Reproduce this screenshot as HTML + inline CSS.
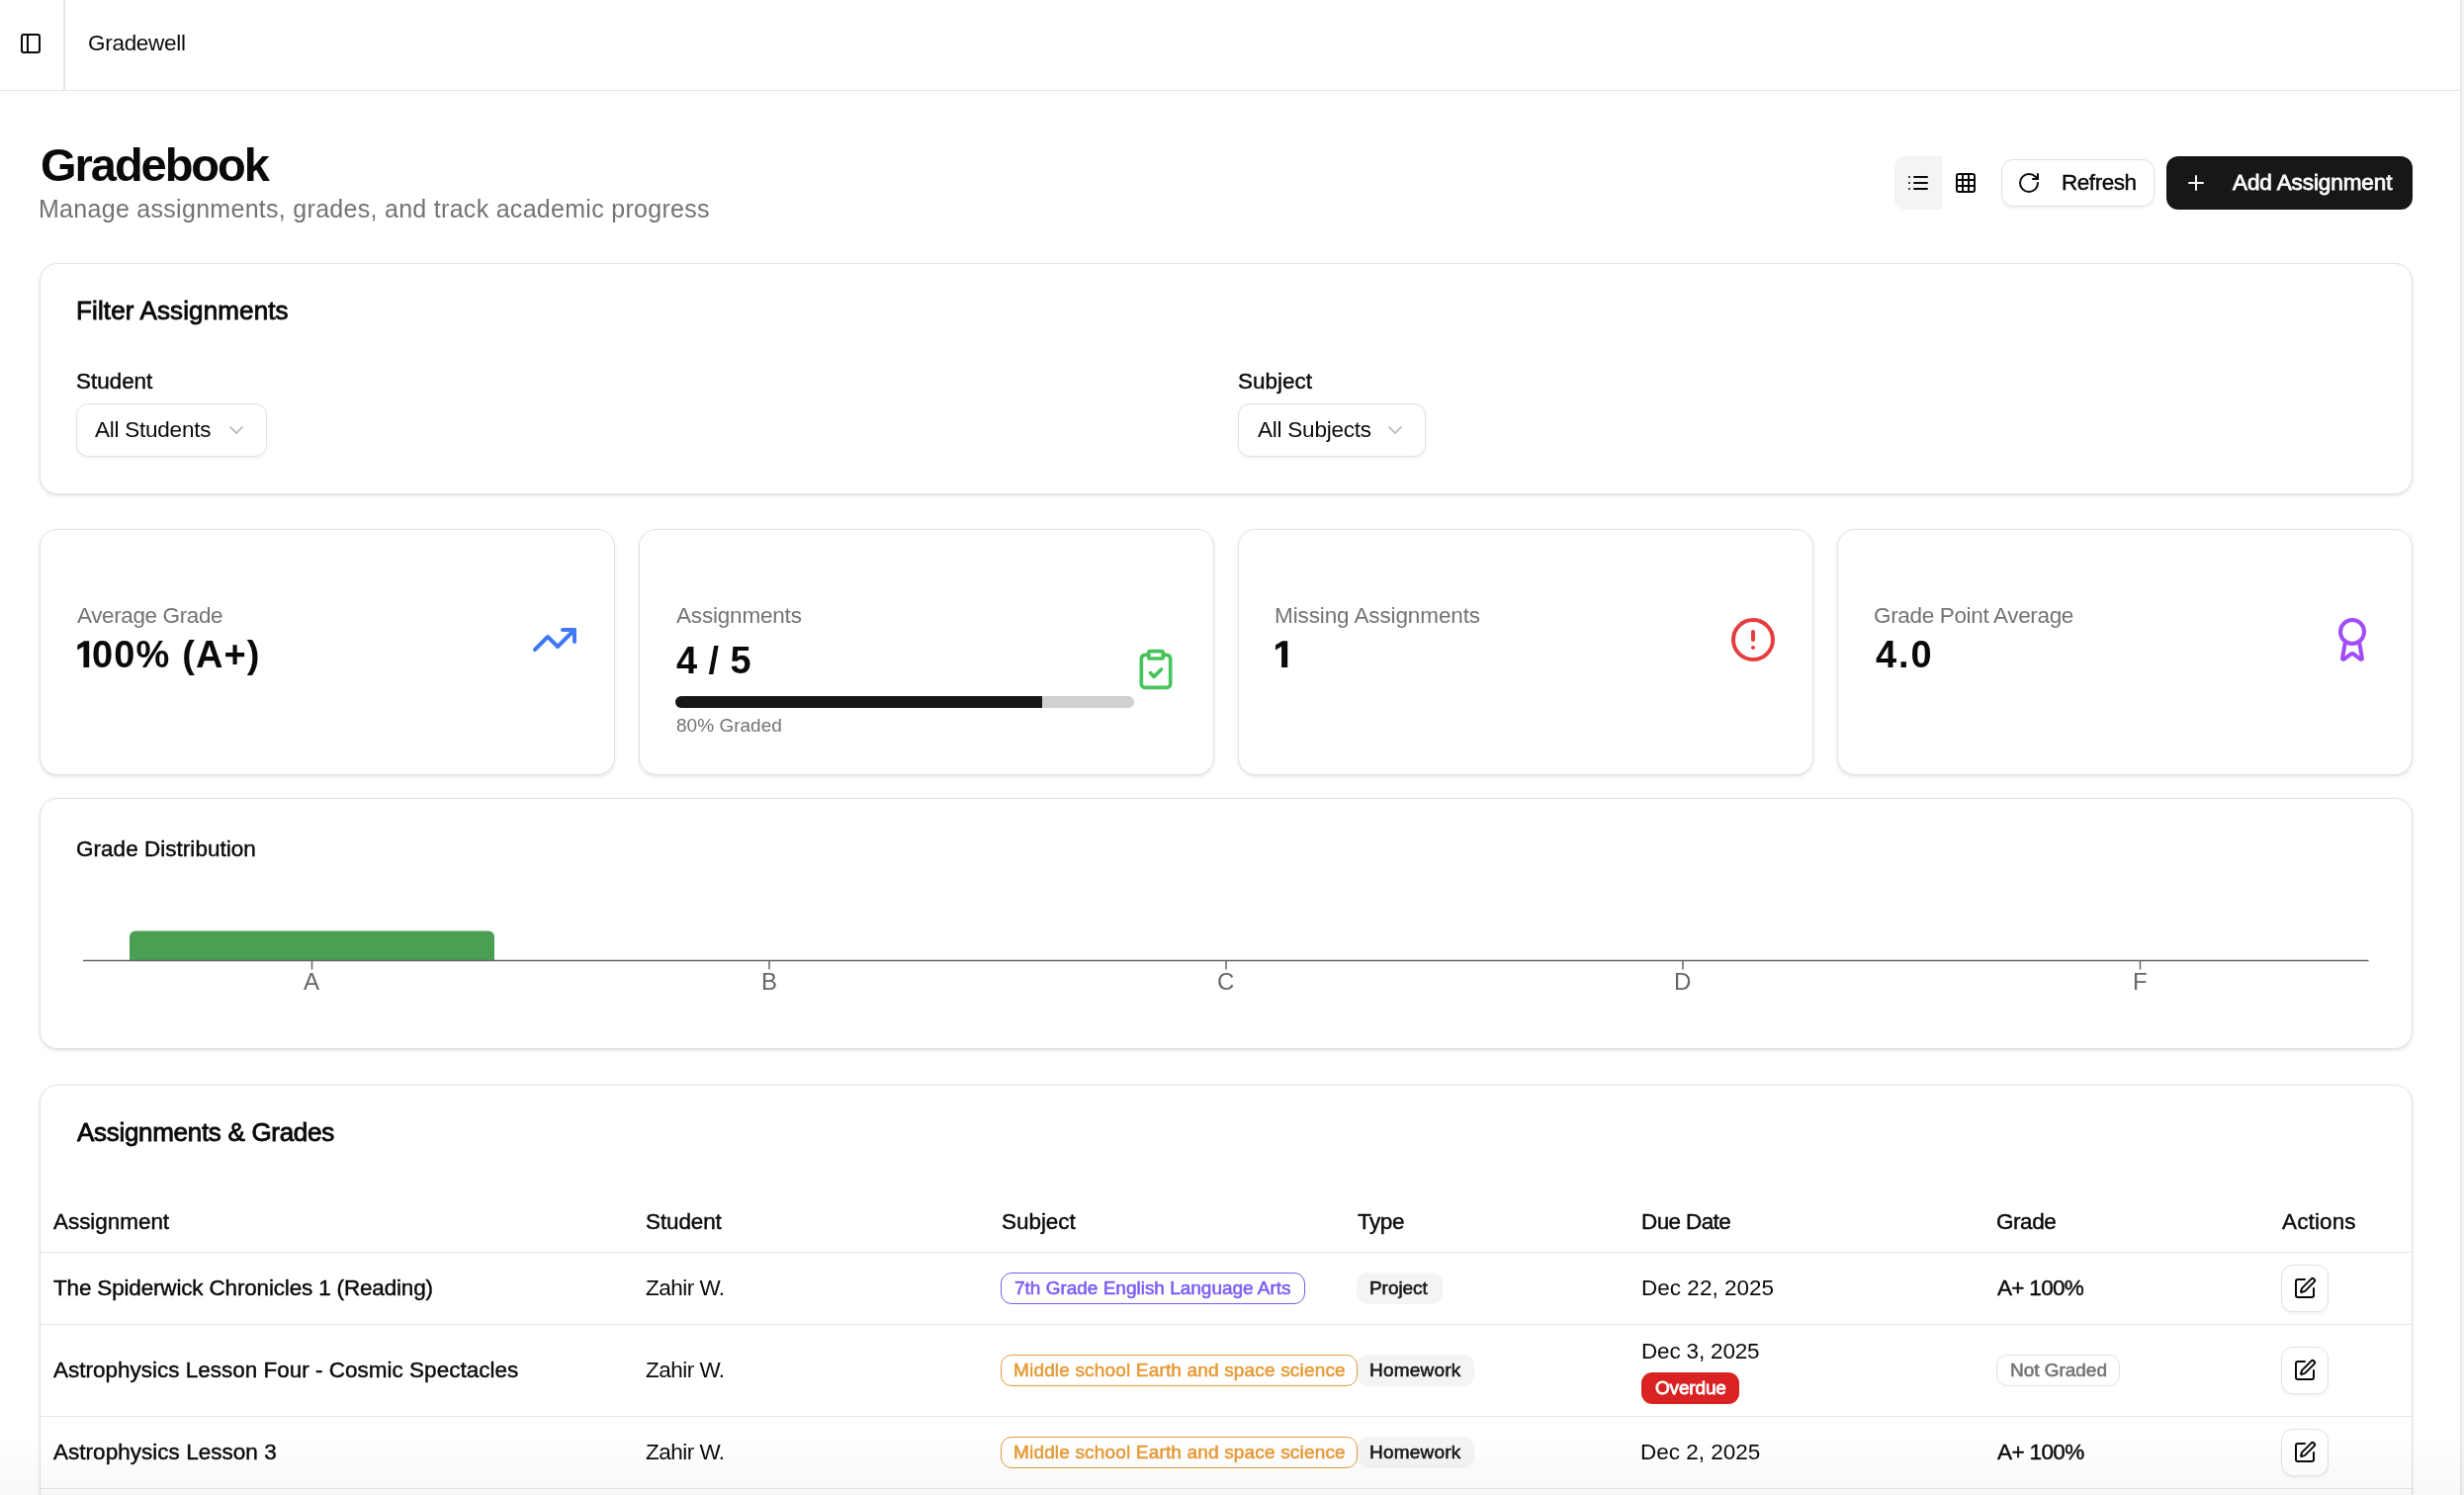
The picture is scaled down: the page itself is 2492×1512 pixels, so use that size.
<!DOCTYPE html>
<html><head><meta charset="utf-8"><title>Gradebook</title>
<style>
html,body{margin:0;padding:0;}
body{width:2492px;height:1512px;overflow:hidden;position:relative;background:#ffffff;font-family:"Liberation Sans",sans-serif;}
.t{position:absolute;white-space:nowrap;font-family:"Liberation Sans",sans-serif;will-change:transform;}
.b{position:absolute;box-sizing:border-box;}
.card{position:absolute;box-sizing:border-box;background:#fff;border:1px solid #e3e3e3;border-radius:18px;box-shadow:0 1.5px 4px rgba(0,0,0,0.07),0 1px 2px rgba(0,0,0,0.05);}
.sel{position:absolute;box-sizing:border-box;background:#fff;border:1px solid #e0e0e0;border-radius:12px;box-shadow:0 1.5px 3px rgba(0,0,0,0.05);}
.ic{position:absolute;overflow:visible;}
.hl{position:absolute;height:1px;background:#e5e5e5;}
.badge{position:absolute;box-sizing:border-box;border-radius:11px;}
.editbtn{position:absolute;box-sizing:border-box;width:48px;height:48px;border:1px solid #e3e3e3;border-radius:12px;background:#fff;box-shadow:0 1.5px 3px rgba(0,0,0,0.05);}

</style></head><body>
<!-- header -->
<div class="b" style="left:0;top:91px;width:2488px;height:1px;background:#e5e5e5"></div>
<div class="b" style="left:64px;top:0;width:2px;height:91px;background:#e5e5e5"></div>
<div class="b" style="left:2488px;top:0;width:2px;height:1512px;background:#e8e8e8"></div>
<div class="b" style="left:2490px;top:0;width:2px;height:1512px;background:#f7f7f7"></div>
<svg class="ic" style="left:19px;top:32px" width="24" height="24" viewBox="0 0 24 24" fill="none" stroke="#0a0a0a" stroke-width="2" stroke-linecap="round" stroke-linejoin="round"><rect width="18" height="18" x="3" y="3" rx="2"/><path d="M9 3v18"/></svg>

<!-- toolbar -->
<div class="b" style="left:1916px;top:158px;width:48px;height:54px;background:#f4f4f4;border-radius:11px 0 0 11px"></div>
<svg class="ic" style="left:1928px;top:173px" width="24" height="24" viewBox="0 0 24 24" fill="none" stroke="#0a0a0a" stroke-width="2" stroke-linecap="round" stroke-linejoin="round"><path d="M3 6h.01"/><path d="M3 12h.01"/><path d="M3 18h.01"/><path d="M8 6h13"/><path d="M8 12h13"/><path d="M8 18h13"/></svg>
<svg class="ic" style="left:1976px;top:173px" width="24" height="24" viewBox="0 0 24 24" fill="none" stroke="#0a0a0a" stroke-width="2" stroke-linecap="round" stroke-linejoin="round"><rect width="18" height="18" x="3" y="3" rx="2"/><path d="M3 9h18"/><path d="M3 15h18"/><path d="M9 3v18"/><path d="M15 3v18"/></svg>
<div class="sel" style="left:2024px;top:161px;width:155px;height:48px"></div>
<svg class="ic" style="left:2040px;top:173px" width="24" height="24" viewBox="0 0 24 24" fill="none" stroke="#0a0a0a" stroke-width="2" stroke-linecap="round" stroke-linejoin="round"><path d="M21 12a9 9 0 1 1-9-9c2.52 0 4.93 1 6.74 2.74L21 8"/><path d="M21 3v5h-5"/></svg>
<div class="b" style="left:2191px;top:158px;width:249px;height:54px;background:#171717;border-radius:12px"></div>
<svg class="ic" style="left:2209px;top:173px" width="24" height="24" viewBox="0 0 24 24" fill="none" stroke="#fafafa" stroke-width="2" stroke-linecap="round" stroke-linejoin="round"><path d="M5 12h14"/><path d="M12 5v14"/></svg>

<!-- filter card -->
<div class="card" style="left:40px;top:266px;width:2400px;height:234px"></div>
<div class="sel" style="left:77px;top:408px;width:193px;height:54px"></div>
<svg class="ic" style="left:227px;top:423px" width="24" height="24" viewBox="0 0 24 24" fill="none" stroke="#b3b3b3" stroke-width="1.7" stroke-linecap="round" stroke-linejoin="round"><path d="m6 9 6 6 6-6"/></svg>
<div class="sel" style="left:1252px;top:408px;width:190px;height:54px"></div>
<svg class="ic" style="left:1399px;top:423px" width="24" height="24" viewBox="0 0 24 24" fill="none" stroke="#b3b3b3" stroke-width="1.7" stroke-linecap="round" stroke-linejoin="round"><path d="m6 9 6 6 6-6"/></svg>

<!-- stat cards -->
<div class="card" style="left:40px;top:535px;width:582px;height:249px"></div>
<div class="card" style="left:646px;top:535px;width:582px;height:249px"></div>
<div class="card" style="left:1252px;top:535px;width:582px;height:249px"></div>
<div class="card" style="left:1858px;top:535px;width:582px;height:249px"></div>
<svg class="ic" style="left:537px;top:623px" width="48" height="48" viewBox="0 0 24 24" fill="none" stroke="#4079f4" stroke-width="2" stroke-linecap="round" stroke-linejoin="round"><path d="M22 7 13.5 15.5 8.5 10.5 2 17"/><path d="M16 7h6v6"/></svg>
<div class="b" style="left:683px;top:704px;width:464px;height:12px;border-radius:6px;background:#d1d1d1;overflow:hidden"><div style="width:371px;height:12px;background:#171717"></div></div>
<svg class="ic" style="left:1147px;top:655px" width="44" height="44" viewBox="0 0 24 24" fill="none" stroke="#46c35a" stroke-width="2" stroke-linecap="round" stroke-linejoin="round"><rect width="8" height="4" x="8" y="2" rx="1" ry="1"/><path d="M16 4h2a2 2 0 0 1 2 2v14a2 2 0 0 1-2 2H6a2 2 0 0 1-2-2V6a2 2 0 0 1 2-2h2"/><path d="m9 14 2 2 4-4"/></svg>
<svg class="ic" style="left:1749px;top:623px" width="48" height="48" viewBox="0 0 24 24" fill="none" stroke="#e53e3e" stroke-width="2" stroke-linecap="round" stroke-linejoin="round"><circle cx="12" cy="12" r="10"/><line x1="12" x2="12" y1="8" y2="12"/><line x1="12" x2="12.01" y1="16" y2="16"/></svg>
<svg class="ic" style="left:2355px;top:623px" width="48" height="48" viewBox="0 0 24 24" fill="none" stroke="#a04cf9" stroke-width="2" stroke-linecap="round" stroke-linejoin="round"><path d="m15.477 12.89 1.515 8.526a.5.5 0 0 1-.81.47l-3.58-2.687a1 1 0 0 0-1.197 0l-3.586 2.686a.5.5 0 0 1-.81-.469l1.514-8.526"/><circle cx="12" cy="8" r="6"/></svg>

<svg class="ic" style="left:1280px;top:640px" width="40" height="40" viewBox="1280 640 40 40"><path d="M1296.1 675 V653.7 L1290 657.4 V652.6 L1296.8 648.2 H1302.2 V675 Z" fill="#0a0a0a"/></svg>
<svg class="ic" style="left:70px;top:640px" width="40" height="40" viewBox="70 640 40 40"><path d="M84.45 675 V653.7 L78.3 657.4 V652.6 L85.1 648.2 H90.2 V675 Z" fill="#0a0a0a"/></svg>
<!-- chart card -->
<div class="card" style="left:40px;top:807px;width:2400px;height:254px"></div>
<svg class="ic" style="left:0;top:900px" width="2492" height="130" viewBox="0 900 2492 130">
  <path d="M131 971 V947.5 a6 6 0 0 1 6 -6 H494 a6 6 0 0 1 6 6 V971 Z" fill="#4b9f53"/>
  <line x1="84" y1="971.5" x2="2395.5" y2="971.5" stroke="#666" stroke-width="1.5"/>
  <line x1="315.5" y1="972" x2="315.5" y2="980.5" stroke="#666" stroke-width="1.5"/>
  <line x1="778" y1="972" x2="778" y2="980.5" stroke="#666" stroke-width="1.5"/>
  <line x1="1240" y1="972" x2="1240" y2="980.5" stroke="#666" stroke-width="1.5"/>
  <line x1="1702" y1="972" x2="1702" y2="980.5" stroke="#666" stroke-width="1.5"/>
  <line x1="2164.5" y1="972" x2="2164.5" y2="980.5" stroke="#666" stroke-width="1.5"/>
</svg>

<!-- table card -->
<div class="card" style="left:40px;top:1097px;width:2400px;height:500px"></div>
<div class="hl" style="left:41px;top:1266px;width:2398px"></div>
<div class="hl" style="left:41px;top:1339px;width:2398px"></div>
<div class="hl" style="left:41px;top:1432px;width:2398px"></div>
<div class="hl" style="left:41px;top:1505px;width:2398px"></div>
<!-- badges -->
<div class="badge" style="left:1012px;top:1287px;width:308px;height:32px;border:1px solid #7b5cf0"></div>
<div class="badge" style="left:1372px;top:1287px;width:87px;height:32px;background:#f4f4f4"></div>
<div class="badge" style="left:1012px;top:1370px;width:361px;height:32px;border:1px solid #e69b38"></div>
<div class="badge" style="left:1373px;top:1370px;width:118px;height:32px;background:#f4f4f4"></div>
<div class="badge" style="left:1660px;top:1388px;width:99px;height:32px;background:#d92323"></div>
<div class="badge" style="left:2019px;top:1370px;width:125px;height:32px;border:1px solid #e3e3e3"></div>
<div class="badge" style="left:1012px;top:1453px;width:361px;height:32px;border:1px solid #e69b38"></div>
<div class="badge" style="left:1373px;top:1453px;width:118px;height:32px;background:#f4f4f4"></div>
<!-- edit buttons -->
<div class="editbtn" style="left:2307px;top:1279px"></div>
<div class="editbtn" style="left:2307px;top:1362px"></div>
<div class="editbtn" style="left:2307px;top:1445px"></div>
<svg class="ic" style="left:2319px;top:1291px" width="24" height="24" viewBox="0 0 24 24" fill="none" stroke="#0a0a0a" stroke-width="2" stroke-linecap="round" stroke-linejoin="round"><path d="M12 3H5a2 2 0 0 0-2 2v14a2 2 0 0 0 2 2h14a2 2 0 0 0 2-2v-7"/><path d="M18.375 2.625a1 1 0 0 1 3 3l-9 9a2 2 0 0 1-.853.506l-2.873.84a.5.5 0 0 1-.62-.62l.84-2.873a2 2 0 0 1 .506-.852z"/></svg>
<svg class="ic" style="left:2319px;top:1374px" width="24" height="24" viewBox="0 0 24 24" fill="none" stroke="#0a0a0a" stroke-width="2" stroke-linecap="round" stroke-linejoin="round"><path d="M12 3H5a2 2 0 0 0-2 2v14a2 2 0 0 0 2 2h14a2 2 0 0 0 2-2v-7"/><path d="M18.375 2.625a1 1 0 0 1 3 3l-9 9a2 2 0 0 1-.853.506l-2.873.84a.5.5 0 0 1-.62-.62l.84-2.873a2 2 0 0 1 .506-.852z"/></svg>
<svg class="ic" style="left:2319px;top:1457px" width="24" height="24" viewBox="0 0 24 24" fill="none" stroke="#0a0a0a" stroke-width="2" stroke-linecap="round" stroke-linejoin="round"><path d="M12 3H5a2 2 0 0 0-2 2v14a2 2 0 0 0 2 2h14a2 2 0 0 0 2-2v-7"/><path d="M18.375 2.625a1 1 0 0 1 3 3l-9 9a2 2 0 0 1-.853.506l-2.873.84a.5.5 0 0 1-.62-.62l.84-2.873a2 2 0 0 1 .506-.852z"/></svg>
<!-- bottom fade -->
<div class="b" style="left:0;top:1455px;width:2492px;height:57px;background:linear-gradient(to bottom,rgba(0,0,0,0),rgba(0,0,0,0.028));pointer-events:none;z-index:5"></div>

<div class="t" style="left:89.2px;top:29px;font-size:22.5px;line-height:29px;font-weight:400;color:#0a0a0a;letter-spacing:-0.29px;">Gradewell</div>
<div class="t" style="left:40.6px;top:137px;font-size:47px;line-height:59px;font-weight:700;color:#0a0a0a;letter-spacing:-2.03px;">Gradebook</div>
<div class="t" style="left:39.0px;top:195px;font-size:25px;line-height:32px;font-weight:400;color:#737373;letter-spacing:0.29px;">Manage assignments, grades, and track academic progress</div>
<div class="t" style="left:2085.4px;top:170px;font-size:22.5px;line-height:29px;font-weight:400;color:#0a0a0a;-webkit-text-stroke:0.42px #0a0a0a;letter-spacing:-0.46px;">Refresh</div>
<div class="t" style="left:2257.7px;top:170px;font-size:22.5px;line-height:29px;font-weight:400;color:#fafafa;-webkit-text-stroke:0.8px #fafafa;letter-spacing:-0.09px;">Add Assignment</div>
<div class="t" style="left:76.5px;top:298px;font-size:26px;line-height:33px;font-weight:400;color:#0a0a0a;-webkit-text-stroke:0.85px #0a0a0a;letter-spacing:0.13px;">Filter Assignments</div>
<div class="t" style="left:76.9px;top:371px;font-size:22.5px;line-height:29px;font-weight:400;color:#0a0a0a;-webkit-text-stroke:0.42px #0a0a0a;letter-spacing:-0.04px;">Student</div>
<div class="t" style="left:96.4px;top:420px;font-size:22.5px;line-height:29px;font-weight:400;color:#0a0a0a;letter-spacing:-0.24px;">All Students</div>
<div class="t" style="left:1252.2px;top:371px;font-size:22.5px;line-height:29px;font-weight:400;color:#0a0a0a;-webkit-text-stroke:0.42px #0a0a0a;">Subject</div>
<div class="t" style="left:1271.7px;top:420px;font-size:22.5px;line-height:29px;font-weight:400;color:#0a0a0a;letter-spacing:-0.23px;">All Subjects</div>
<div class="t" style="left:77.5px;top:608px;font-size:22.5px;line-height:29px;font-weight:400;color:#737373;letter-spacing:-0.38px;">Average Grade</div>
<div class="t" style="left:92.8px;top:638px;font-size:38px;line-height:48px;font-weight:700;color:#0a0a0a;letter-spacing:1.13px;">00% (A+)</div>
<div class="t" style="left:683.6px;top:608px;font-size:22.5px;line-height:29px;font-weight:400;color:#737373;letter-spacing:-0.19px;">Assignments</div>
<div class="t" style="left:684.4px;top:644px;font-size:38px;line-height:48px;font-weight:700;color:#0a0a0a;letter-spacing:0.45px;">4 / 5</div>
<div class="t" style="left:683.8px;top:722px;font-size:19px;line-height:24px;font-weight:400;color:#737373;letter-spacing:0.02px;">80% Graded</div>
<div class="t" style="left:1289.4px;top:608px;font-size:22.5px;line-height:29px;font-weight:400;color:#737373;letter-spacing:-0.11px;">Missing Assignments</div>
<div class="t" style="left:1895.1px;top:608px;font-size:22.5px;line-height:29px;font-weight:400;color:#737373;letter-spacing:-0.34px;">Grade Point Average</div>
<div class="t" style="left:1896.6px;top:638px;font-size:38px;line-height:48px;font-weight:700;color:#0a0a0a;letter-spacing:1.85px;">4.0</div>
<div class="t" style="left:76.7px;top:844px;font-size:22.5px;line-height:29px;font-weight:400;color:#0a0a0a;-webkit-text-stroke:0.42px #0a0a0a;letter-spacing:0.03px;">Grade Distribution</div>
<div class="t" style="left:307.3px;top:978px;font-size:24px;line-height:30px;font-weight:400;color:#666666;">A</div>
<div class="t" style="left:770.3px;top:978px;font-size:24px;line-height:30px;font-weight:400;color:#666666;">B</div>
<div class="t" style="left:1231.0px;top:978px;font-size:24px;line-height:30px;font-weight:400;color:#666666;">C</div>
<div class="t" style="left:1693.0px;top:978px;font-size:24px;line-height:30px;font-weight:400;color:#666666;">D</div>
<div class="t" style="left:2157.1px;top:978px;font-size:24px;line-height:30px;font-weight:400;color:#666666;">F</div>
<div class="t" style="left:78.1px;top:1129px;font-size:26px;line-height:33px;font-weight:400;color:#0a0a0a;-webkit-text-stroke:0.85px #0a0a0a;letter-spacing:-0.30px;">Assignments &amp; Grades</div>
<div class="t" style="left:54.1px;top:1221px;font-size:22.5px;line-height:29px;font-weight:400;color:#0a0a0a;-webkit-text-stroke:0.42px #0a0a0a;letter-spacing:-0.05px;">Assignment</div>
<div class="t" style="left:652.8px;top:1221px;font-size:22.5px;line-height:29px;font-weight:400;color:#0a0a0a;-webkit-text-stroke:0.42px #0a0a0a;letter-spacing:-0.12px;">Student</div>
<div class="t" style="left:1012.6px;top:1221px;font-size:22.5px;line-height:29px;font-weight:400;color:#0a0a0a;-webkit-text-stroke:0.42px #0a0a0a;letter-spacing:-0.04px;">Subject</div>
<div class="t" style="left:1373.4px;top:1221px;font-size:22.5px;line-height:29px;font-weight:400;color:#0a0a0a;-webkit-text-stroke:0.42px #0a0a0a;letter-spacing:-0.46px;">Type</div>
<div class="t" style="left:1660.4px;top:1221px;font-size:22.5px;line-height:29px;font-weight:400;color:#0a0a0a;-webkit-text-stroke:0.42px #0a0a0a;letter-spacing:-0.62px;">Due Date</div>
<div class="t" style="left:2019.2px;top:1221px;font-size:22.5px;line-height:29px;font-weight:400;color:#0a0a0a;-webkit-text-stroke:0.42px #0a0a0a;letter-spacing:-0.44px;">Grade</div>
<div class="t" style="left:2307.5px;top:1221px;font-size:22.5px;line-height:29px;font-weight:400;color:#0a0a0a;-webkit-text-stroke:0.42px #0a0a0a;letter-spacing:0.14px;">Actions</div>
<div class="t" style="left:54.2px;top:1288px;font-size:22.5px;line-height:29px;font-weight:400;color:#0a0a0a;-webkit-text-stroke:0.42px #0a0a0a;letter-spacing:-0.17px;">The Spiderwick Chronicles 1 (Reading)</div>
<div class="t" style="left:653.4px;top:1288px;font-size:22.5px;line-height:29px;font-weight:400;color:#0a0a0a;letter-spacing:-0.52px;">Zahir W.</div>
<div class="t" style="left:54.2px;top:1371px;font-size:22.5px;line-height:29px;font-weight:400;color:#0a0a0a;-webkit-text-stroke:0.42px #0a0a0a;">Astrophysics Lesson Four - Cosmic Spectacles</div>
<div class="t" style="left:653.4px;top:1371px;font-size:22.5px;line-height:29px;font-weight:400;color:#0a0a0a;letter-spacing:-0.52px;">Zahir W.</div>
<div class="t" style="left:54.2px;top:1454px;font-size:22.5px;line-height:29px;font-weight:400;color:#0a0a0a;-webkit-text-stroke:0.42px #0a0a0a;letter-spacing:0.03px;">Astrophysics Lesson 3</div>
<div class="t" style="left:653.4px;top:1454px;font-size:22.5px;line-height:29px;font-weight:400;color:#0a0a0a;letter-spacing:-0.52px;">Zahir W.</div>
<div class="t" style="left:1026.4px;top:1291px;font-size:19px;line-height:24px;font-weight:400;color:#7b5cf0;-webkit-text-stroke:0.55px #7b5cf0;letter-spacing:-0.01px;">7th Grade English Language Arts</div>
<div class="t" style="left:1385.4px;top:1291px;font-size:19px;line-height:24px;font-weight:400;color:#171717;-webkit-text-stroke:0.55px #171717;letter-spacing:-0.05px;">Project</div>
<div class="t" style="left:1659.7px;top:1288px;font-size:22.5px;line-height:29px;font-weight:400;color:#0a0a0a;letter-spacing:0.02px;">Dec 22, 2025</div>
<div class="t" style="left:2019.9px;top:1288px;font-size:22.5px;line-height:29px;font-weight:400;color:#0a0a0a;-webkit-text-stroke:0.42px #0a0a0a;letter-spacing:-0.69px;">A+ 100%</div>
<div class="t" style="left:1025.3px;top:1374px;font-size:19px;line-height:24px;font-weight:400;color:#e69b38;-webkit-text-stroke:0.55px #e69b38;letter-spacing:0.17px;">Middle school Earth and space science</div>
<div class="t" style="left:1384.9px;top:1374px;font-size:19px;line-height:24px;font-weight:400;color:#171717;-webkit-text-stroke:0.55px #171717;letter-spacing:0.21px;">Homework</div>
<div class="t" style="left:1660.4px;top:1352px;font-size:22.5px;line-height:29px;font-weight:400;color:#0a0a0a;letter-spacing:-0.17px;">Dec 3, 2025</div>
<div class="t" style="left:1673.8px;top:1392px;font-size:19px;line-height:24px;font-weight:400;color:#ffffff;-webkit-text-stroke:0.8px #ffffff;letter-spacing:-0.17px;">Overdue</div>
<div class="t" style="left:2032.6px;top:1374px;font-size:19px;line-height:24px;font-weight:400;color:#737373;-webkit-text-stroke:0.55px #737373;letter-spacing:-0.03px;">Not Graded</div>
<div class="t" style="left:1025.3px;top:1457px;font-size:19px;line-height:24px;font-weight:400;color:#e69b38;-webkit-text-stroke:0.55px #e69b38;letter-spacing:0.17px;">Middle school Earth and space science</div>
<div class="t" style="left:1384.9px;top:1457px;font-size:19px;line-height:24px;font-weight:400;color:#171717;-webkit-text-stroke:0.55px #171717;letter-spacing:0.21px;">Homework</div>
<div class="t" style="left:1659.2px;top:1454px;font-size:22.5px;line-height:29px;font-weight:400;color:#0a0a0a;">Dec 2, 2025</div>
<div class="t" style="left:2020.1px;top:1454px;font-size:22.5px;line-height:29px;font-weight:400;color:#0a0a0a;-webkit-text-stroke:0.42px #0a0a0a;letter-spacing:-0.63px;">A+ 100%</div>
</body></html>
